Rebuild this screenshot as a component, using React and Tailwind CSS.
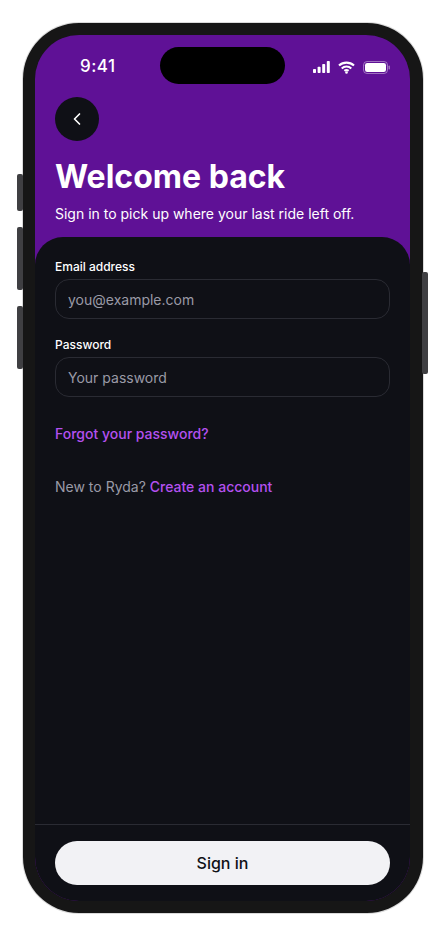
import { ChevronLeft } from "lucide-react";

function SideButton({ className }) {
  return <div className={`absolute w-[6px] rounded-[2px] bg-[#3f3f42] ${className}`} />;
}

function StatusIcons() {
  return (
    <div className="flex items-center gap-2">
      <svg width="17" height="12" viewBox="0 0 17 12" fill="white">
        <rect x="0" y="8" width="3" height="4" rx="0.8" />
        <rect x="4.6" y="5.8" width="3" height="6.2" rx="0.8" />
        <rect x="9.2" y="3" width="3" height="9" rx="0.8" />
        <rect x="13.8" y="0" width="3" height="12" rx="0.8" />
      </svg>
      <svg width="17" height="13" viewBox="0 0 17 13" fill="none" stroke="white" strokeWidth="2.1">
        <path d="M1 4.6C5.2 .6 11.8 .6 16 4.6" />
        <path d="M3.7 7.4C6.4 4.9 10.6 4.9 13.3 7.4" />
        <path d="M6.4 9.9C7.6 8.9 9.4 8.9 10.6 9.9" />
        <circle cx="8.5" cy="11.5" r="1.3" fill="white" stroke="none" />
      </svg>
      <svg width="27" height="13" viewBox="0 0 27 13" fill="none">
        <rect x="0.5" y="0.5" width="24" height="12" rx="3.5" stroke="white" strokeOpacity="0.4" />
        <rect x="2" y="2" width="21" height="9" rx="2.2" fill="white" />
        <rect x="25.5" y="4.5" width="1.5" height="4" rx="0.7" fill="white" fillOpacity="0.4" />
      </svg>
    </div>
  );
}

function Field({ label, placeholder, type = "text" }) {
  return (
    <div className="flex flex-col">
      <label className="mb-1 text-xs leading-[16px] font-medium text-white">{label}</label>
      <input
        type={type}
        placeholder={placeholder}
        className="h-10 w-full rounded-[14px] border border-[#2a2b33] bg-transparent px-3 text-sm text-white outline-none placeholder:text-[#9a9aa6]"
      />
    </div>
  );
}

export default function App() {
  return (
    <div className="h-[936px] w-[445px] overflow-hidden bg-white pt-[23px] pl-[23px] font-['Inter',sans-serif]">
      <div className="relative h-[890px] w-[400px]">
        <SideButton className="top-[151px] left-[-6px] h-[37px]" />
        <SideButton className="top-[204px] left-[-6px] h-[63px]" />
        <SideButton className="top-[283px] left-[-6px] h-[63px]" />
        <SideButton className="top-[249px] right-[-5px] h-[102px]" />

        <div className="h-full w-full rounded-[56px] border-[12px] border-r-[13px] border-[#161616] bg-[#161616] shadow-[0_0_0_1px_#8a8a8a50]">
          <div className="relative flex h-full w-full flex-col overflow-hidden rounded-[44px] bg-[#5f1196]">
            <div className="absolute top-[12px] left-[125px] h-[37px] w-[125px] rounded-full bg-black" />

            <div className="flex h-[62px] shrink-0 items-center justify-between pt-[2px] pr-5 pl-[45px]">
              <span className="text-[17px] font-medium tracking-[0.5px] text-white">9:41</span>
              <StatusIcons />
            </div>

            <div className="px-5 text-white">
              <button className="flex h-11 w-11 items-center justify-center rounded-full bg-[#0f1016]">
                <ChevronLeft className="h-5 w-5 text-white" />
              </button>
              <h1 className="mt-[14px] text-[32px] leading-[44px] font-bold">Welcome back</h1>
              <p className="mt-[5px] text-sm leading-[20px]">Sign in to pick up where your last ride left off.</p>
            </div>

            <div className="mt-[13px] flex min-h-0 flex-1 flex-col rounded-t-[28px] bg-[#0f1016]">
              <div className="flex-1 px-5 pt-[22px]">
                <div className="flex flex-col gap-[18px]">
                  <Field label="Email address" placeholder="you@example.com" type="email" />
                  <Field label="Password" placeholder="Your password" type="password" />
                </div>
                <a className="mt-[27px] block text-sm leading-[20px] font-medium text-[#b450f0]">Forgot your password?</a>
                <p className="mt-[33px] text-sm leading-[20px] text-[#9a9aa6]">
                  New to Ryda? <a className="font-medium text-[#b450f0]">Create an account</a>
                </p>
              </div>
              <div className="border-t border-[#2a2b33] p-4 px-5">
                <button className="h-11 w-full rounded-full bg-[#f2f2f5] text-base font-medium text-[#0f1016]">Sign in</button>
              </div>
            </div>
          </div>
        </div>
      </div>
    </div>
  );
}
